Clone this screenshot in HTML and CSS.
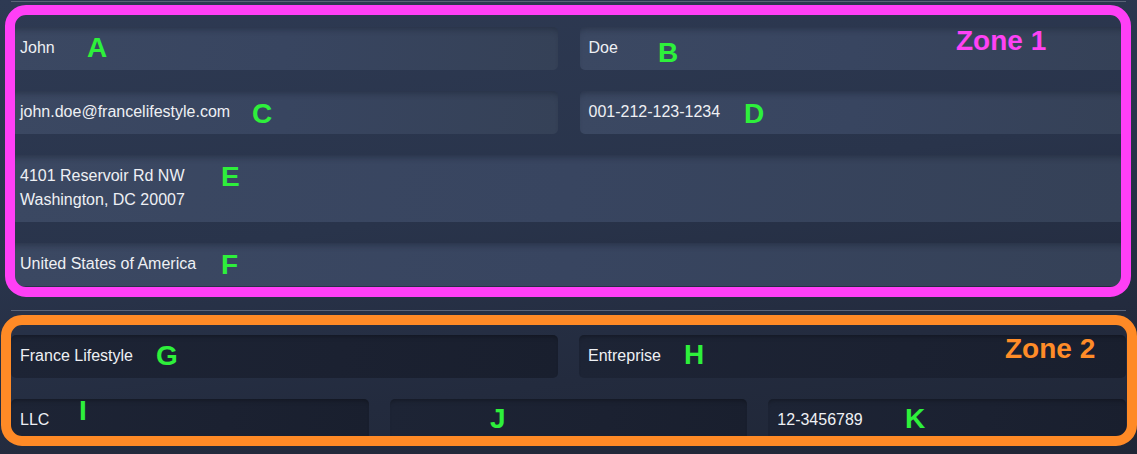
FILE: index.html
```html
<!DOCTYPE html>
<html lang="en">
<head>
<meta charset="utf-8">
<title>Contact form zones</title>
<link rel="stylesheet" href="styles.css">
</head>
<body>
<div class="page">
  <div class="rule"></div>
  <section class="zone zone-contact">
    <div class="field">John</div>
    <div class="field">Doe</div>
    <div class="field">john.doe@francelifestyle.com</div>
    <div class="field">001-212-123-1234</div>
    <div class="field field-wide field-tall">4101 Reservoir Rd NW<br>Washington, DC 20007</div>
    <div class="field field-wide">United States of America</div>
  </section>
  <div class="rule"></div>
  <section class="zone zone-company">
    <div class="field field-half">France Lifestyle</div>
    <div class="field field-half">Entreprise</div>
    <div class="field field-third">LLC</div>
    <div class="field field-third"></div>
    <div class="field field-third">12-3456789</div>
  </section>

  <div class="frame frame-1"></div>
  <div class="frame frame-2"></div>
  <span class="zone-label zone-label-1">Zone 1</span>
  <span class="zone-label zone-label-2">Zone 2</span>
  <span class="tag tag-a">A</span>
  <span class="tag tag-b">B</span>
  <span class="tag tag-c">C</span>
  <span class="tag tag-d">D</span>
  <span class="tag tag-e">E</span>
  <span class="tag tag-f">F</span>
  <span class="tag tag-g">G</span>
  <span class="tag tag-h">H</span>
  <span class="tag tag-i">I</span>
  <span class="tag tag-j">J</span>
  <span class="tag tag-k">K</span>
</div>
</body>
</html>
```

FILE: styles.css
```css
* { box-sizing: border-box; }

html, body {
  margin: 0;
  padding: 0;
}

body {
  width: 1137px;
  height: 454px;
  overflow: hidden;
  background: linear-gradient(172deg, #2e3a53 0%, #29344b 45%, #232b3e 75%, #1f2636 100%);
  font-family: "Liberation Sans", Arial, sans-serif;
}

.page {
  position: relative;
  width: 1137px;
  height: 454px;
  padding: 1px 11px 0;
}

.rule {
  height: 1px;
  background: #5b6478;
}

.zone {
  display: grid;
  column-gap: 22px;
  row-gap: 21px;
}

.zone-contact {
  grid-template-columns: 1fr 1fr;
  padding: 25px 0 24px;
}

.zone-company {
  grid-template-columns: repeat(6, 1fr);
  column-gap: 21px;
  padding-top: 24px;
}

.field {
  height: 43px;
  padding: 9px 9px;
  border-radius: 5px;
  font-size: 16px;
  line-height: 24px;
  color: #eef0f4;
  white-space: nowrap;
}

.zone-contact .field {
  background: linear-gradient(100deg, #3b4862 0%, #384560 50%, #354157 100%);
  box-shadow: inset 0 6px 6px -4px rgba(20, 28, 44, 0.45);
}

.zone-company .field {
  background: linear-gradient(100deg, #1d2435 0%, #1b2131 60%, #191f2e 100%);
  box-shadow: inset 0 5px 5px -4px rgba(0, 0, 0, 0.35);
}

.field-wide { grid-column: 1 / -1; }
.field-tall { height: 67px; }
.field-half { grid-column: span 3; }
.field-third { grid-column: span 2; }

/* annotation overlay */
.frame {
  position: absolute;
  border-width: 10px;
  border-style: solid;
  border-radius: 21px;
  pointer-events: none;
}

.frame-1 {
  left: 5px;
  top: 5px;
  width: 1126px;
  height: 292px;
  border-color: #ff3ff6;
}

.frame-2 {
  left: 1px;
  top: 315px;
  width: 1136px;
  height: 131px;
  border-color: #ff8a26;
}

.zone-label {
  position: absolute;
  font-size: 28px;
  line-height: 28px;
  font-weight: bold;
}

.zone-label-1 { left: 956px; top: 27px; color: #ff42f5; }
.zone-label-2 { left: 1005px; top: 335px; color: #ff8c28; }

.tag {
  position: absolute;
  font-size: 28px;
  line-height: 28px;
  font-weight: bold;
  color: #2ef03b;
}

.tag-a { left: 87px; top: 34px; }
.tag-b { left: 658px; top: 39px; }
.tag-c { left: 252px; top: 100px; }
.tag-d { left: 744px; top: 100px; }
.tag-e { left: 221px; top: 163px; }
.tag-f { left: 221px; top: 251px; }
.tag-g { left: 156px; top: 342px; }
.tag-h { left: 684px; top: 341px; }
.tag-i { left: 79px; top: 397px; }
.tag-j { left: 490px; top: 405px; }
.tag-k { left: 905px; top: 405px; }
```
